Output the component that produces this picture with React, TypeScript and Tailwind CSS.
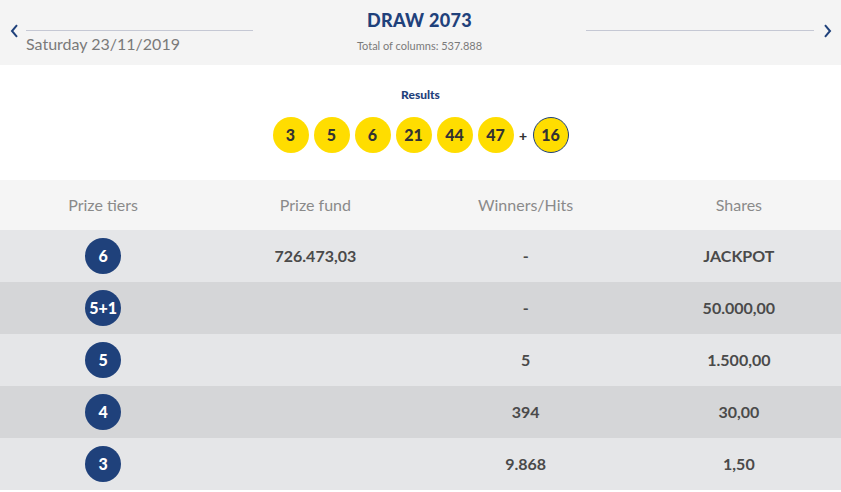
import React from "react";

const balls = [3, 5, 6, 21, 44, 47];

const rows = [
  { tier: "6", fund: "726.473,03", winners: "-", share: "JACKPOT" },
  { tier: "5+1", fund: "", winners: "-", share: "50.000,00" },
  { tier: "5", fund: "", winners: "5", share: "1.500,00" },
  { tier: "4", fund: "", winners: "394", share: "30,00" },
  { tier: "3", fund: "", winners: "9.868", share: "1,50" },
];

export default function App() {
  return (
    <div className="w-[841px] bg-white" style={{ fontFamily: "Lato, 'Noto Sans', sans-serif" }}>
      {/* Header */}
      <div className="h-[65px] bg-[#f4f4f4] flex items-start">
        <div className="w-[26px] h-[60px] flex items-center justify-center pl-[2px]">
          <svg width="9" height="14" viewBox="0 0 9 14" className="mt-[1px]">
            <path d="M7 1.2 L2 7 L7 12.8" fill="none" stroke="#1f417b" strokeWidth="2" />
          </svg>
        </div>
        <div className="w-[227px] pt-[30px]">
          <div className="h-px bg-[#c5c8d4]" />
          <div className="text-[16px] text-[#7a7a7a] mt-[3px] leading-5">Saturday 23/11/2019</div>
        </div>
        <div className="flex-1 flex flex-col items-center pt-[8px]">
          <div className="text-[18px] font-black text-[#1f417b] leading-6 tracking-[0.3px]">DRAW 2073</div>
          <div className="text-[11px] text-[#7a7a7a] mt-[6px] leading-4">Total of columns: 537.888</div>
        </div>
        <div className="w-[228px] pt-[30px]">
          <div className="h-px bg-[#c5c8d4]" />
        </div>
        <div className="w-[27px] h-[60px] flex items-center justify-center">
          <svg width="9" height="14" viewBox="0 0 9 14" className="mt-[1px]">
            <path d="M2 1.2 L7 7 L2 12.8" fill="none" stroke="#1f417b" strokeWidth="2" />
          </svg>
        </div>
      </div>

      {/* Results */}
      <div className="h-[115px] flex flex-col items-center pt-[22px]">
        <div className="text-[12px] font-black text-[#1f417b] leading-4">Results</div>
        <div className="flex items-center mt-[14px] gap-[5px]">
          {balls.map((b) => (
            <div
              key={b}
              className="w-[36px] h-[36px] rounded-full bg-[#ffdd00] flex items-center justify-center text-[16px] font-black text-[#333333]"
            >
              {b}
            </div>
          ))}
          <div className="w-[9px] text-center text-[14px] font-black text-[#333333]">+</div>
          <div className="w-[36px] h-[36px] rounded-full bg-[#ffdd00] border border-[#1f417b] flex items-center justify-center text-[16px] font-black text-[#333333]">
            16
          </div>
        </div>
      </div>

      {/* Table */}
      <div className="grid grid-cols-4 h-[50px] bg-[#f5f5f5] items-center text-[16px] text-[#8a8a8a] text-center">
        <div className="pr-[4px]">Prize tiers</div>
        <div>Prize fund</div>
        <div>Winners/Hits</div>
        <div className="pl-[6px]">Shares</div>
      </div>
      {rows.map((r, i) => (
        <div
          key={r.tier}
          className={`grid grid-cols-4 h-[52px] items-center text-center text-[16px] font-bold text-[#4a4a4a] ${
            i % 2 === 0 ? "bg-[#e5e6e8]" : "bg-[#d5d6d8]"
          }`}
        >
          <div className="flex justify-center pr-[4px]">
            <div className="w-[36px] h-[36px] rounded-full bg-[#1f417b] text-white flex items-center justify-center text-[16px] font-black">
              {r.tier}
            </div>
          </div>
          <div>{r.fund}</div>
          <div>{r.winners}</div>
          <div className="pl-[6px]">{r.share}</div>
        </div>
      ))}
    </div>
  );
}
